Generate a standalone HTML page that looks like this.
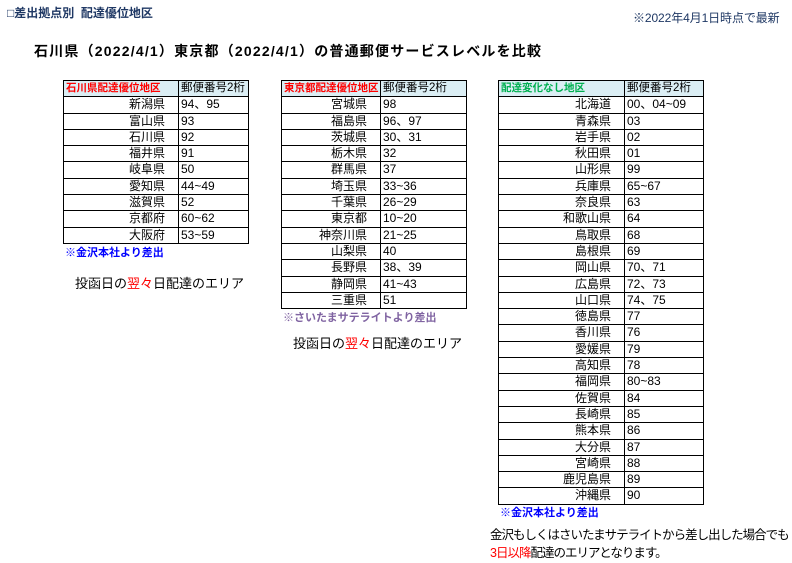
<!DOCTYPE html>
<html><head><meta charset="utf-8"><style>
body{margin:0;width:792px;height:563px;background:#fff;position:relative;overflow:hidden;font-family:"Liberation Sans","Noto Sans CJK JP",sans-serif;color:#000}
.a{position:absolute;white-space:nowrap}
.t{position:absolute;border-top:1px solid #000;border-left:1px solid #000;box-sizing:border-box}
.r{display:flex;height:16.3px;box-sizing:border-box}
.r div{border-right:1px solid #000;border-bottom:1px solid #000;box-sizing:border-box;font-size:12px;line-height:15px;height:16.3px;overflow:hidden;white-space:nowrap}
.r .n{text-align:right;padding-right:13px}
.r .c{padding-left:2px}
.h div{background:#dbeef4;font-size:11.5px}
.h .n{text-align:left;padding-left:2px;font-weight:bold;color:#f00;font-size:10.5px}
</style></head><body>
<div class="a" style="left:7px;top:4px;font-size:12px;font-weight:bold;color:#1f3864">□差出拠点別&nbsp; 配達優位地区</div>
<div class="a" style="left:633px;top:9px;font-size:12px;color:#1f3864;letter-spacing:-0.1px">※2022年4月1日時点で最新</div>
<div class="a" style="left:34px;top:41px;font-size:14px;font-weight:bold;letter-spacing:1.2px">石川県（2022/4/1）東京都（2022/4/1）の普通郵便サービスレベルを比較</div>

<div class="t" style="left:63px;top:80px;width:186px">
<div class="r h"><div class="n" style="width:115px">石川県配達優位地区</div><div class="c" style="width:70px">郵便番号2桁</div></div>
<div class="r"><div class="n" style="width:115px">新潟県</div><div class="c" style="width:70px">94、95</div></div>
<div class="r"><div class="n" style="width:115px">富山県</div><div class="c" style="width:70px">93</div></div>
<div class="r"><div class="n" style="width:115px">石川県</div><div class="c" style="width:70px">92</div></div>
<div class="r"><div class="n" style="width:115px">福井県</div><div class="c" style="width:70px">91</div></div>
<div class="r"><div class="n" style="width:115px">岐阜県</div><div class="c" style="width:70px">50</div></div>
<div class="r"><div class="n" style="width:115px">愛知県</div><div class="c" style="width:70px">44~49</div></div>
<div class="r"><div class="n" style="width:115px">滋賀県</div><div class="c" style="width:70px">52</div></div>
<div class="r"><div class="n" style="width:115px">京都府</div><div class="c" style="width:70px">60~62</div></div>
<div class="r"><div class="n" style="width:115px">大阪府</div><div class="c" style="width:70px">53~59</div></div>
</div>
<div class="a" style="left:65px;top:244px;font-size:11px;font-weight:bold;color:#00f">※金沢本社より差出</div>
<div class="a" style="left:75px;top:273px;font-size:13px">投函日の<span style="color:#f00">翌々</span>日配達のエリア</div>

<div class="t" style="left:281px;top:80px;width:186px">
<div class="r h"><div class="n" style="width:99px">東京都配達優位地区</div><div class="c" style="width:86px">郵便番号2桁</div></div>
<div class="r"><div class="n" style="width:99px">宮城県</div><div class="c" style="width:86px">98</div></div>
<div class="r"><div class="n" style="width:99px">福島県</div><div class="c" style="width:86px">96、97</div></div>
<div class="r"><div class="n" style="width:99px">茨城県</div><div class="c" style="width:86px">30、31</div></div>
<div class="r"><div class="n" style="width:99px">栃木県</div><div class="c" style="width:86px">32</div></div>
<div class="r"><div class="n" style="width:99px">群馬県</div><div class="c" style="width:86px">37</div></div>
<div class="r"><div class="n" style="width:99px">埼玉県</div><div class="c" style="width:86px">33~36</div></div>
<div class="r"><div class="n" style="width:99px">千葉県</div><div class="c" style="width:86px">26~29</div></div>
<div class="r"><div class="n" style="width:99px">東京都</div><div class="c" style="width:86px">10~20</div></div>
<div class="r"><div class="n" style="width:99px">神奈川県</div><div class="c" style="width:86px">21~25</div></div>
<div class="r"><div class="n" style="width:99px">山梨県</div><div class="c" style="width:86px">40</div></div>
<div class="r"><div class="n" style="width:99px">長野県</div><div class="c" style="width:86px">38、39</div></div>
<div class="r"><div class="n" style="width:99px">静岡県</div><div class="c" style="width:86px">41~43</div></div>
<div class="r"><div class="n" style="width:99px">三重県</div><div class="c" style="width:86px">51</div></div>
</div>
<div class="a" style="left:283px;top:309px;font-size:11px;font-weight:bold;color:#8064a2">※さいたまサテライトより差出</div>
<div class="a" style="left:293px;top:333px;font-size:13px">投函日の<span style="color:#f00">翌々</span>日配達のエリア</div>

<div class="t" style="left:498px;top:80px;width:206px">
<div class="r h"><div class="n" style="width:126px;color:#00b050">配達変化なし地区</div><div class="c" style="width:79px">郵便番号2桁</div></div>
<div class="r"><div class="n" style="width:126px">北海道</div><div class="c" style="width:79px">00、04~09</div></div>
<div class="r"><div class="n" style="width:126px">青森県</div><div class="c" style="width:79px">03</div></div>
<div class="r"><div class="n" style="width:126px">岩手県</div><div class="c" style="width:79px">02</div></div>
<div class="r"><div class="n" style="width:126px">秋田県</div><div class="c" style="width:79px">01</div></div>
<div class="r"><div class="n" style="width:126px">山形県</div><div class="c" style="width:79px">99</div></div>
<div class="r"><div class="n" style="width:126px">兵庫県</div><div class="c" style="width:79px">65~67</div></div>
<div class="r"><div class="n" style="width:126px">奈良県</div><div class="c" style="width:79px">63</div></div>
<div class="r"><div class="n" style="width:126px">和歌山県</div><div class="c" style="width:79px">64</div></div>
<div class="r"><div class="n" style="width:126px">鳥取県</div><div class="c" style="width:79px">68</div></div>
<div class="r"><div class="n" style="width:126px">島根県</div><div class="c" style="width:79px">69</div></div>
<div class="r"><div class="n" style="width:126px">岡山県</div><div class="c" style="width:79px">70、71</div></div>
<div class="r"><div class="n" style="width:126px">広島県</div><div class="c" style="width:79px">72、73</div></div>
<div class="r"><div class="n" style="width:126px">山口県</div><div class="c" style="width:79px">74、75</div></div>
<div class="r"><div class="n" style="width:126px">徳島県</div><div class="c" style="width:79px">77</div></div>
<div class="r"><div class="n" style="width:126px">香川県</div><div class="c" style="width:79px">76</div></div>
<div class="r"><div class="n" style="width:126px">愛媛県</div><div class="c" style="width:79px">79</div></div>
<div class="r"><div class="n" style="width:126px">高知県</div><div class="c" style="width:79px">78</div></div>
<div class="r"><div class="n" style="width:126px">福岡県</div><div class="c" style="width:79px">80~83</div></div>
<div class="r"><div class="n" style="width:126px">佐賀県</div><div class="c" style="width:79px">84</div></div>
<div class="r"><div class="n" style="width:126px">長崎県</div><div class="c" style="width:79px">85</div></div>
<div class="r"><div class="n" style="width:126px">熊本県</div><div class="c" style="width:79px">86</div></div>
<div class="r"><div class="n" style="width:126px">大分県</div><div class="c" style="width:79px">87</div></div>
<div class="r"><div class="n" style="width:126px">宮崎県</div><div class="c" style="width:79px">88</div></div>
<div class="r"><div class="n" style="width:126px">鹿児島県</div><div class="c" style="width:79px">89</div></div>
<div class="r"><div class="n" style="width:126px">沖縄県</div><div class="c" style="width:79px">90</div></div>
</div>
<div class="a" style="left:500px;top:504px;font-size:11px;font-weight:bold;color:#00f">※金沢本社より差出</div>
<div class="a" style="left:490px;top:526px;font-size:12.5px;line-height:18px;letter-spacing:-1px">金沢もしくはさいたまサテライトから差し出した場合でも<br><span style="color:#f00">3日以降</span>配達のエリアとなります。</div>
</body></html>
